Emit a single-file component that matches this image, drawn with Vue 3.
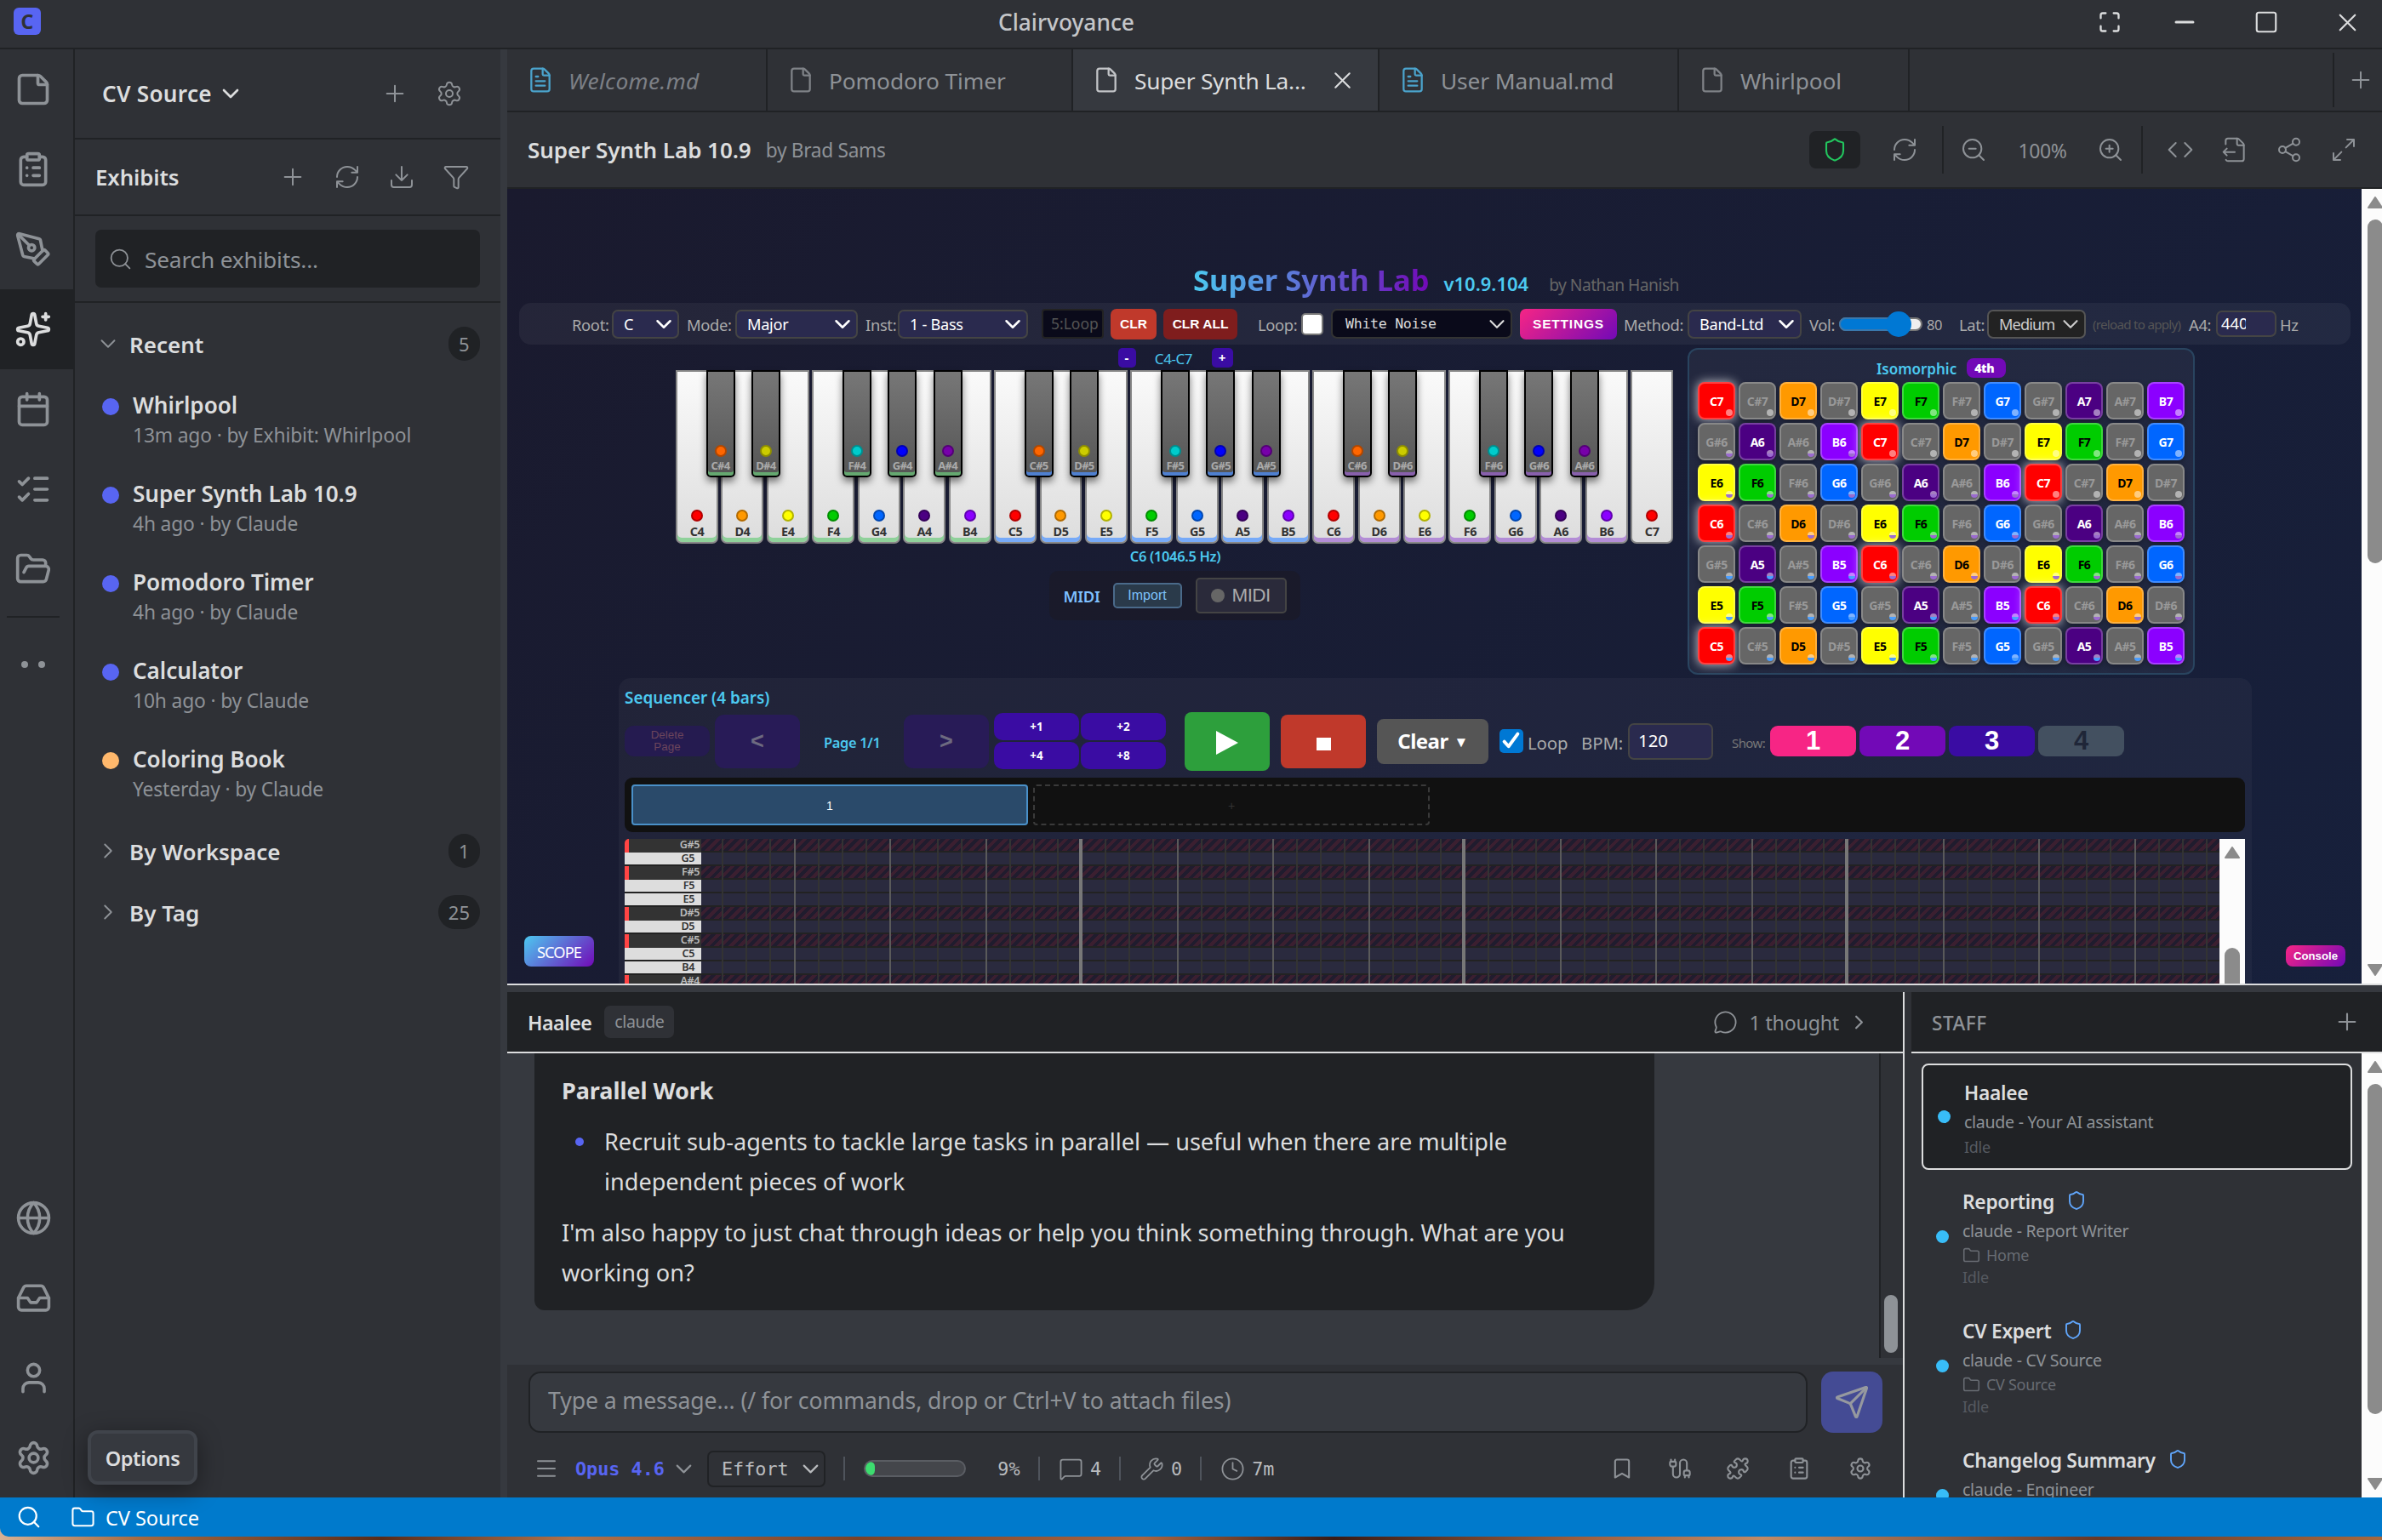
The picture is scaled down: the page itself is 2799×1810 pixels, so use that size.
<script setup>
import { h } from 'vue'

const icons = {
  note: '<path d="M21 9a2.4 2.4 0 0 0-.706-1.706l-3.588-3.588A2.4 2.4 0 0 0 15 3H5a2 2 0 0 0-2 2v14a2 2 0 0 0 2 2h14a2 2 0 0 0 2-2z"/><path d="M15 3v5a1 1 0 0 0 1 1h5"/>',
  clipboard: '<rect width="8" height="4" x="8" y="2" rx="1"/><path d="M16 4h2a2 2 0 0 1 2 2v14a2 2 0 0 1-2 2H6a2 2 0 0 1-2-2V6a2 2 0 0 1 2-2h2M12 11h4M12 16h4M8 11h.01M8 16h.01"/>',
  pen: '<path d="M15.707 21.293a1 1 0 0 1-1.414 0l-1.586-1.586a1 1 0 0 1 0-1.414l5.586-5.586a1 1 0 0 1 1.414 0l1.586 1.586a1 1 0 0 1 0 1.414z"/><path d="m18 13-1.375-6.874a1 1 0 0 0-.746-.776L3.235 2.028a1 1 0 0 0-1.207 1.207L5.35 15.879a1 1 0 0 0 .776.746L13 18"/><path d="m2.3 2.3 7.286 7.286"/><circle cx="11" cy="11" r="2"/>',
  sparkles: '<path d="M11.017 2.814a1 1 0 0 1 1.966 0l1.051 5.558a2 2 0 0 0 1.594 1.594l5.558 1.051a1 1 0 0 1 0 1.966l-5.558 1.051a2 2 0 0 0-1.594 1.594l-1.051 5.558a1 1 0 0 1-1.966 0l-1.051-5.558a2 2 0 0 0-1.594-1.594l-5.558-1.051a1 1 0 0 1 0-1.966l5.558-1.051a2 2 0 0 0 1.594-1.594z"/><path d="M20 2v4M22 4h-4"/><circle cx="4" cy="20" r="2"/>',
  calendar: '<path d="M8 2v4M16 2v4M3 10h18"/><rect width="18" height="18" x="3" y="4" rx="2"/>',
  checks: '<path d="M13 5h8M13 12h8M13 19h8M3 17l2 2 4-4M3 7l2 2 4-4"/>',
  folderOpen: '<path d="m6 14 1.5-2.9A2 2 0 0 1 9.24 10H20a2 2 0 0 1 1.94 2.5l-1.54 6a2 2 0 0 1-1.95 1.5H4a2 2 0 0 1-2-2V5a2 2 0 0 1 2-2h3.9a2 2 0 0 1 1.69.9l.81 1.2a2 2 0 0 0 1.67.9H18a2 2 0 0 1 2 2v2"/>',
  folder: '<path d="M20 20a2 2 0 0 0 2-2V8a2 2 0 0 0-2-2h-7.9a2 2 0 0 1-1.69-.9L9.6 3.9A2 2 0 0 0 7.93 3H4a2 2 0 0 0-2 2v13a2 2 0 0 0 2 2Z"/>',
  globe: '<circle cx="12" cy="12" r="10"/><path d="M12 2a14.5 14.5 0 0 0 0 20 14.5 14.5 0 0 0 0-20M2 12h20"/>',
  inbox: '<path d="M22 12h-6l-2 3h-4l-2-3H2"/><path d="M5.45 5.11 2 12v6a2 2 0 0 0 2 2h16a2 2 0 0 0 2-2v-6l-3.45-6.89A2 2 0 0 0 16.76 4H7.24a2 2 0 0 0-1.79 1.11z"/>',
  user: '<path d="M19 21v-2a4 4 0 0 0-4-4H9a4 4 0 0 0-4 4v2"/><circle cx="12" cy="7" r="4"/>',
  gear: '<path d="M9.671 4.136a2.34 2.34 0 0 1 4.659 0 2.34 2.34 0 0 0 3.319 1.915 2.34 2.34 0 0 1 2.33 4.033 2.34 2.34 0 0 0 0 3.831 2.34 2.34 0 0 1-2.33 4.033 2.34 2.34 0 0 0-3.319 1.915 2.34 2.34 0 0 1-4.659 0 2.34 2.34 0 0 0-3.32-1.915 2.34 2.34 0 0 1-2.33-4.033 2.34 2.34 0 0 0 0-3.831A2.34 2.34 0 0 1 6.35 6.051a2.34 2.34 0 0 0 3.319-1.915"/><circle cx="12" cy="12" r="3"/>',
  plus: '<path d="M5 12h14M12 5v14"/>',
  close: '<path d="M18 6 6 18M6 6l12 12"/>',
  minus: '<path d="M5 12h14"/>',
  square: '<rect width="18" height="18" x="3" y="3" rx="2"/>',
  corners: '<path d="M8 3H5a2 2 0 0 0-2 2v3M21 8V5a2 2 0 0 0-2-2h-3M3 16v3a2 2 0 0 0 2 2h3M16 21h3a2 2 0 0 0 2-2v-3"/>',
  down: '<path d="m6 9 6 6 6-6"/>',
  right: '<path d="m9 18 6-6-6-6"/>',
  refresh: '<path d="M3 12a9 9 0 0 1 9-9 9.75 9.75 0 0 1 6.74 2.74L21 8M21 3v5h-5M21 12a9 9 0 0 1-9 9 9.75 9.75 0 0 1-6.74-2.74L3 16M8 16H3v5"/>',
  download: '<path d="M21 15v4a2 2 0 0 1-2 2H5a2 2 0 0 1-2-2v-4M7 10l5 5 5-5M12 15V3"/>',
  funnel: '<path d="M10 20a1 1 0 0 0 .553.895l2 1A1 1 0 0 0 14 21v-7a2 2 0 0 1 .517-1.341L21.74 4.67A1 1 0 0 0 21 3H3a1 1 0 0 0-.742 1.67l7.225 7.989A2 2 0 0 1 10 14z"/>',
  search: '<circle cx="11" cy="11" r="8"/><path d="m21 21-4.35-4.35"/>',
  file: '<path d="M6 22a2 2 0 0 1-2-2V4a2 2 0 0 1 2-2h8a2.4 2.4 0 0 1 1.704.706l3.588 3.588A2.4 2.4 0 0 1 20 8v12a2 2 0 0 1-2 2z"/><path d="M14 2v5a1 1 0 0 0 1 1h5"/>',
  fileText: '<path d="M6 22a2 2 0 0 1-2-2V4a2 2 0 0 1 2-2h8a2.4 2.4 0 0 1 1.704.706l3.588 3.588A2.4 2.4 0 0 1 20 8v12a2 2 0 0 1-2 2z"/><path d="M14 2v5a1 1 0 0 0 1 1h5M10 9H8M16 13H8M16 17H8"/>',
  shield: '<path d="M20 13c0 5-3.5 7.5-7.66 8.95a1 1 0 0 1-.67-.01C7.5 20.5 4 18 4 13V6a1 1 0 0 1 1-1c2 0 4.5-1.2 6.24-2.72a1.17 1.17 0 0 1 1.52 0C14.51 3.81 17 5 19 5a1 1 0 0 1 1 1z"/>',
  zoomOut: '<circle cx="11" cy="11" r="8"/><path d="m21 21-4.35-4.35M8 11h6"/>',
  zoomIn: '<circle cx="11" cy="11" r="8"/><path d="m21 21-4.35-4.35M8 11h6M11 8v6"/>',
  code: '<path d="m16 18 6-6-6-6M8 6l-6 6 6 6"/>',
  fileOut: '<path d="M4.226 20.925A2 2 0 0 0 6 22h12a2 2 0 0 0 2-2V8a2.4 2.4 0 0 0-.706-1.706l-3.588-3.588A2.4 2.4 0 0 0 14 2H6a2 2 0 0 0-2 2v3.127"/><path d="M14 2v5a1 1 0 0 0 1 1h5M5 11l-3 3M5 17l-3-3h10"/>',
  share: '<circle cx="18" cy="5" r="3"/><circle cx="6" cy="12" r="3"/><circle cx="18" cy="19" r="3"/><path d="m8.59 13.51 6.83 3.98M15.41 6.51l-6.82 3.98"/>',
  expand: '<path d="M15 3h6v6M21 3l-7 7M3 21l7-7M9 21H3v-6"/>',
  bubble: '<path d="M2.992 16.342a2 2 0 0 1 .094 1.167l-1.065 3.29a1 1 0 0 0 1.236 1.168l3.413-.998a2 2 0 0 1 1.099.092 10 10 0 1 0-4.777-4.719"/>',
  message: '<path d="M22 17a2 2 0 0 1-2 2H6.828a2 2 0 0 0-1.414.586l-2.202 2.202A.71.71 0 0 1 2 21.286V5a2 2 0 0 1 2-2h16a2 2 0 0 1 2 2z"/>',
  wrench: '<path d="M14.7 6.3a1 1 0 0 0 0 1.4l1.6 1.6a1 1 0 0 0 1.4 0l3.106-3.105c.32-.322.863-.22.983.218a6 6 0 0 1-8.259 7.057l-7.91 7.91a1 1 0 0 1-2.999-3l7.91-7.91a6 6 0 0 1 7.057-8.259c.438.12.54.662.219.984z"/>',
  clock: '<circle cx="12" cy="12" r="10"/><path d="M12 6v6l4 2"/>',
  menu: '<path d="M4 5h16M4 12h16M4 19h16"/>',
  bookmark: '<path d="m19 21-7-4-7 4V5a2 2 0 0 1 2-2h10a2 2 0 0 1 2 2z"/>',
  cable: '<path d="M17 19a1 1 0 0 1-1-1v-2a2 2 0 0 1 2-2h2a2 2 0 0 1 2 2v2a1 1 0 0 1-1 1zM17 21v-2M19 14V6.5a1 1 0 0 0-7 0v11a1 1 0 0 1-7 0V10M21 21v-2M3 5V3M4 10a2 2 0 0 1-2-2V6a1 1 0 0 1 1-1h4a1 1 0 0 1 1 1v2a2 2 0 0 1-2 2zM7 5V3"/>',
  puzzle: '<path d="M15.39 4.39a1 1 0 0 0 1.68-.474 2.5 2.5 0 1 1 3.014 3.015 1 1 0 0 0-.474 1.68l1.683 1.682a2.414 2.414 0 0 1 0 3.414L19.61 15.39a1 1 0 0 1-1.68-.474 2.5 2.5 0 1 0-3.014 3.015 1 1 0 0 1 .474 1.68l-1.683 1.682a2.414 2.414 0 0 1-3.414 0L8.61 19.61a1 1 0 0 0-1.68.474 2.5 2.5 0 1 1-3.014-3.015 1 1 0 0 0 .474-1.68l-1.683-1.682a2.414 2.414 0 0 1 0-3.414L4.39 8.61a1 1 0 0 1 1.68.474 2.5 2.5 0 1 0 3.014-3.015 1 1 0 0 1-.474-1.68l1.683-1.682a2.414 2.414 0 0 1 3.414 0z"/>',
  send: '<path d="M14.536 21.686a.5.5 0 0 0 .937-.024l6.5-19a.496.496 0 0 0-.635-.635l-19 6.5a.5.5 0 0 0-.024.937l7.93 3.18a2 2 0 0 1 1.112 1.11z"/><path d="m21.854 2.147-10.94 10.939"/>',
  check: '<path d="m5 13 4.5 5L19 5"/>'
}

const Icon = (props) => h('svg', {
  viewBox: '0 0 24 24',
  width: props.size || 32,
  height: props.size || 32,
  fill: 'none',
  stroke: 'currentColor',
  'stroke-width': props.sw || 1.5,
  'stroke-linecap': 'round',
  'stroke-linejoin': 'round',
  innerHTML: icons[props.name]
})
Icon.props = ['name', 'size', 'sw']

const railTop = ['note', 'clipboard', 'pen', 'sparkles', 'calendar', 'checks', 'folderOpen']
const railBottom = ['globe', 'inbox', 'user', 'gear']

const recent = [
  { name: 'Whirlpool', meta: '13m ago · by Exhibit: Whirlpool', color: '#5865f2' },
  { name: 'Super Synth Lab 10.9', meta: '4h ago · by Claude', color: '#5865f2' },
  { name: 'Pomodoro Timer', meta: '4h ago · by Claude', color: '#5865f2' },
  { name: 'Calculator', meta: '10h ago · by Claude', color: '#5865f2' },
  { name: 'Coloring Book', meta: 'Yesterday · by Claude', color: '#ffb86c' }
]

const tabs = [
  { label: 'Welcome.md', icon: 'fileText', width: 306, cls: 'preview' },
  { label: 'Pomodoro Timer', icon: 'file', width: 359 },
  { label: 'Super Synth La...', icon: 'file', width: 360, cls: 'active' },
  { label: 'User Manual.md', icon: 'fileText', width: 352 },
  { label: 'Whirlpool', icon: 'file', width: 271 }
]

const noteNames = ['C', 'C#', 'D', 'D#', 'E', 'F', 'F#', 'G', 'G#', 'A', 'A#', 'B']
const noteColors = {
  C: '#ff0000', 'C#': '#ff6600', D: '#ff9900', 'D#': '#cccc00', E: '#ffff00', F: '#00cc00',
  'F#': '#00cccc', G: '#0066ff', 'G#': '#0000ff', A: '#4b0082', 'A#': '#7700aa', B: '#8b00ff'
}

// piano C4..C7, each white key may carry the sharp to its right
const whiteKeys = []
for (let oct = 4; oct <= 7; oct++) {
  for (const n of ['C', 'D', 'E', 'F', 'G', 'A', 'B']) {
    if (oct === 7 && n !== 'C') break
    const sharp = oct < 7 && n !== 'E' && n !== 'B' ? n + '#' : null
    whiteKeys.push({ n, oct, sharp })
  }
}

// isomorphic rows go down by a major third
const isoRows = []
for (let r = 0; r < 7; r++) {
  const row = []
  for (let c = 0; c < 12; c++) {
    const midi = 84 - r * 4 + c
    const n = noteNames[midi % 12]
    row.push({ n, oct: Math.floor(midi / 12), sharp: n.length > 1 })
  }
  isoRows.push(row)
}

const seqRows = ['G#5', 'G5', 'F#5', 'F5', 'E5', 'D#5', 'D5', 'C#5', 'C5', 'B4', 'A#4']
const lanes = ['1', '2', '3', '4']

const staff = [
  { name: 'Haalee', role: 'claude - Your AI assistant', selected: true },
  { name: 'Reporting', role: 'claude - Report Writer', folder: 'Home' },
  { name: 'CV Expert', role: 'claude - CV Source', folder: 'CV Source' },
  { name: 'Changelog Summary', role: 'claude - Engineer', folder: 'CV Source' }
]
</script>

<template>
  <div class="app">
    <header class="titlebar">
      <div class="logo">C</div>
      <div class="app-name">Clairvoyance</div>
      <div class="win-controls">
        <Icon name="corners" size="28" sw="2" />
        <Icon name="minus" size="34" sw="2.2" />
        <Icon name="square" size="30" sw="1.7" />
        <Icon name="close" size="35" sw="1.5" />
      </div>
    </header>

    <div class="main">
      <!-- activity rail -->
      <nav class="rail">
        <div v-for="i in railTop" :key="i" class="rail-item" :class="{ on: i === 'sparkles' }">
          <Icon :name="i" size="44" sw="2" />
        </div>
        <div class="rail-sep"></div>
        <div class="rail-dots"><i></i><i></i></div>
        <div class="rail-fill"></div>
        <div v-for="i in railBottom" :key="i" class="rail-item">
          <Icon :name="i" size="43" sw="2" />
        </div>
        <div class="tooltip">Options</div>
      </nav>

      <!-- exhibits sidebar -->
      <aside class="sidebar">
        <div class="ws-head">
          <span class="ws-name">CV Source</span>
          <Icon name="down" size="32" sw="2" class="ws-chev" />
          <span class="grow"></span>
          <Icon name="plus" size="32" />
          <Icon name="gear" size="32" />
        </div>
        <div class="ex-head">
          <span class="ex-title">Exhibits</span>
          <span class="grow"></span>
          <Icon name="plus" /><Icon name="refresh" /><Icon name="download" /><Icon name="funnel" />
        </div>
        <div class="ex-search">
          <div class="search-box"><Icon name="search" size="29" /><span>Search exhibits...</span></div>
        </div>
        <div class="groups">
          <div class="group-head">
            <Icon name="down" size="30" /><span>Recent</span><b>5</b>
          </div>
          <div class="recent-list">
            <div v-for="r in recent" :key="r.name" class="exhibit">
              <i class="ex-dot" :style="{ background: r.color }"></i>
              <div>
                <div class="ex-name">{{ r.name }}</div>
                <div class="ex-meta">{{ r.meta }}</div>
              </div>
            </div>
          </div>
          <div class="group-head"><Icon name="right" size="30" /><span>By Workspace</span><b>1</b></div>
          <div class="group-head"><Icon name="right" size="30" /><span>By Tag</span><b>25</b></div>
        </div>
      </aside>
      <div class="v-split"></div>

      <section class="content">
        <div class="tabs">
          <div v-for="t in tabs" :key="t.label" class="tab" :class="[t.cls, t.icon]" :style="{ width: t.width + 'px' }">
            <Icon :name="t.icon" size="32" sw="1.7" />
            <span>{{ t.label }}</span>
            <Icon v-if="t.cls === 'active'" name="close" size="33" class="tab-x" />
          </div>
          <div class="grow"></div>
          <div class="tab-add"><Icon name="plus" size="32" /></div>
        </div>

        <div class="ex-bar">
          <span class="bar-title">Super Synth Lab 10.9</span>
          <span class="bar-by">by Brad Sams</span>
          <span class="grow"></span>
          <div class="bar-tools">
            <span class="trust"><Icon name="shield" size="30" sw="1.7" /></span>
            <Icon name="refresh" class="t-refresh" />
            <span class="tool-sep"></span>
            <Icon name="zoomOut" class="t-zout" />
            <span class="pct">100%</span>
            <Icon name="zoomIn" class="t-zin" />
            <span class="tool-sep second"></span>
            <Icon name="code" class="t-code" />
            <Icon name="fileOut" class="t-act" />
            <Icon name="share" class="t-act" />
            <Icon name="expand" class="t-act" />
          </div>
        </div>

        <!-- exhibit frame -->
        <div class="frame">
          <div class="synth">
            <div class="s-title">
              <span class="s-name">Super Synth Lab</span>
              <span class="s-ver">v10.9.104</span>
              <span class="s-by">by Nathan Hanish</span>
            </div>

            <div class="s-toolbar">
              <label>Root:</label>
              <div class="sel w79">C<Icon name="down" size="30" sw="2" /></div>
              <label>Mode:</label>
              <div class="sel w144">Major<Icon name="down" size="30" sw="2" /></div>
              <label>Inst:</label>
              <div class="sel w153">1 - Bass<Icon name="down" size="30" sw="2" /></div>
              <div class="slot">5:Loop</div>
              <button class="red">CLR</button>
              <button class="darkred">CLR ALL</button>
              <label>Loop:</label>
              <div class="box"></div>
              <div class="sel noise">White Noise<Icon name="down" size="30" sw="1.7" /></div>
              <button class="pink">SETTINGS</button>
              <label>Method:</label>
              <div class="sel w134">Band-Ltd<Icon name="down" size="30" sw="2" /></div>
              <label>Vol:</label>
              <div class="slider"><i></i><b></b></div>
              <label class="vol">80</label>
              <label>Lat:</label>
              <div class="sel lat">Medium<Icon name="down" size="30" sw="1.7" /></div>
              <label class="hint">(reload to apply)</label>
              <label>A4:</label>
              <div class="a4"><span>440</span></div>
              <label>Hz</label>
            </div>

            <div class="play-area">
              <div class="keys-col">
                <div class="range"><b>-</b><span>C4-C7</span><b class="wide">+</b></div>
                <div class="piano">
                  <div v-for="k in whiteKeys" :key="k.n + k.oct" class="wkey" :class="'o' + k.oct">
                    <i class="dot" :style="{ background: noteColors[k.n] }"></i>
                    <span>{{ k.n }}{{ k.oct }}</span>
                    <div v-if="k.sharp" class="bkey" :class="'o' + k.oct">
                      <i class="dot" :style="{ background: noteColors[k.sharp] }"></i>
                      <span>{{ k.sharp }}{{ k.oct }}</span>
                    </div>
                  </div>
                </div>
                <div class="freq">C6 (1046.5 Hz)</div>
                <div class="midi">
                  <span>MIDI</span>
                  <div class="import">Import</div>
                  <div class="midi-btn"><i></i>MIDI</div>
                </div>
              </div>

              <div class="iso">
                <div class="iso-head"><span>Isomorphic</span><b>4th</b></div>
                <div class="iso-grid">
                  <template v-for="(row, r) in isoRows" :key="r">
                    <div
                      v-for="(c, i) in row"
                      :key="r + '-' + i"
                      class="cell"
                      :class="['p' + c.oct, c.sharp ? 'sharp' : 'n' + c.n]"
                      :style="c.sharp ? null : { backgroundColor: noteColors[c.n] }"
                    >{{ c.n }}{{ c.oct }}<i></i></div>
                  </template>
                </div>
              </div>
            </div>

            <div class="seq">
              <div class="seq-title">Sequencer (4 bars)</div>
              <div class="seq-ctl">
                <button class="del">Delete<br>Page</button>
                <button class="nav">&lt;</button>
                <span class="page">Page 1/1</span>
                <button class="nav">&gt;</button>
                <div class="adds"><b>+1</b><b>+2</b><b>+4</b><b>+8</b></div>
                <button class="play"><svg width="26" height="28" viewBox="0 0 26 28"><path d="M0 0 26 14 0 28z" fill="#fff" /></svg></button>
                <button class="stop"><i></i></button>
                <button class="clear">Clear <small>▼</small></button>
                <div class="box checked"><Icon name="check" size="27" sw="3.4" /></div>
                <label>Loop</label>
                <label>BPM:</label>
                <div class="bpm">120</div>
                <label class="show">Show:</label>
                <div class="lanes">
                  <b v-for="l in lanes" :key="l" :class="'l' + l">{{ l }}</b>
                </div>
              </div>
              <div class="pages">
                <div class="pg">1</div>
                <div class="pg add">+</div>
              </div>
              <div class="roll">
                <div class="roll-rows">
                  <div v-for="n in seqRows" :key="n" class="rrow" :class="{ blk: n.length > 2 }">
                    <div class="rlabel">{{ n }}</div>
                    <div v-for="s in 64" :key="s" class="step" :class="{ beat: s % 4 === 0, measure: s % 16 === 0 }"></div>
                  </div>
                </div>
                <div class="roll-scroll">
                  <svg width="20" height="14" viewBox="0 0 20 14"><path d="M10 1 18 13H2z" fill="#8b8b8b" stroke="#8b8b8b" stroke-width="2" stroke-linejoin="round" /></svg>
                  <i></i>
                </div>
              </div>
            </div>
            <div class="scope">SCOPE</div>
            <div class="console">Console</div>
          </div>
          <div class="scroll">
            <svg width="20" height="14" viewBox="0 0 20 14"><path d="M10 1 18 13H2z" fill="#8b8b8b" stroke="#8b8b8b" stroke-width="2" stroke-linejoin="round" /></svg>
            <i class="thumb"></i>
            <svg width="20" height="14" viewBox="0 0 20 14"><path d="M10 13 18 1H2z" fill="#8b8b8b" stroke="#8b8b8b" stroke-width="2" stroke-linejoin="round" /></svg>
          </div>
        </div>
        <div class="h-split"></div>

        <div class="bottom">
          <!-- chat -->
          <div class="chat">
            <div class="chat-head">
              <span class="agent">Haalee</span>
              <span class="model">claude</span>
              <span class="grow"></span>
              <Icon name="bubble" size="29" />
              <span class="thought">1 thought</span>
              <Icon name="right" size="27" sw="2" />
            </div>
            <div class="chat-body">
              <div class="msg">
                <h4>Parallel Work</h4>
                <ul>
                  <li>Recruit sub-agents to tackle large tasks in parallel — useful when there are multiple<br>independent pieces of work</li>
                </ul>
                <p>I'm also happy to just chat through ideas or help you think something through. What are you<br>working on?</p>
              </div>
              <div class="chat-scroll"><i></i></div>
            </div>
            <div class="composer">
              <div class="input-row">
                <div class="input">Type a message... (/ for commands, drop or Ctrl+V to attach files)</div>
                <div class="send"><Icon name="send" size="42" sw="1.8" /></div>
              </div>
              <div class="status-row">
                <Icon name="menu" size="30" sw="1.6" />
                <span class="opus">Opus 4.6</span>
                <Icon name="down" size="31" sw="1.7" class="opus-chev" />
                <div class="effort">Effort<Icon name="down" size="31" sw="1.7" /></div>
                <i class="bar"></i>
                <div class="meter"><i></i></div>
                <span class="m-pct">9%</span>
                <i class="bar b2"></i>
                <span class="stat"><Icon name="message" size="29" />4</span>
                <i class="bar"></i>
                <span class="stat"><Icon name="wrench" size="29" />0</span>
                <i class="bar"></i>
                <span class="stat"><Icon name="clock" size="29" />7m</span>
                <span class="grow"></span>
                <div class="quick">
                  <Icon name="bookmark" size="28" sw="1.8" />
                  <Icon name="cable" size="28" sw="1.8" />
                  <Icon name="puzzle" size="28" sw="1.8" />
                  <Icon name="clipboard" size="28" sw="1.8" />
                  <Icon name="gear" size="28" sw="1.8" />
                </div>
              </div>
            </div>
          </div>

          <!-- staff -->
          <div class="staff">
            <div class="staff-head"><span>STAFF</span><Icon name="plus" size="32" sw="1.6" /></div>
            <div class="staff-body">
              <div class="staff-list">
                <div v-for="s in staff" :key="s.name" class="person" :class="{ selected: s.selected }">
                  <i class="p-dot"></i>
                  <div>
                    <div class="p-name">{{ s.name }}<Icon v-if="!s.selected" name="shield" size="24" sw="1.9" /></div>
                    <div class="p-role">{{ s.role }}</div>
                    <div v-if="s.folder" class="p-folder"><Icon name="folder" size="21" sw="1.8" />{{ s.folder }}</div>
                    <div class="p-idle">Idle</div>
                  </div>
                </div>
              </div>
              <div class="scroll small">
                <svg width="20" height="14" viewBox="0 0 20 14"><path d="M10 1 18 13H2z" fill="#8b8b8b" stroke="#8b8b8b" stroke-width="2" stroke-linejoin="round" /></svg>
                <i class="thumb"></i>
                <svg width="20" height="14" viewBox="0 0 20 14"><path d="M10 13 18 1H2z" fill="#8b8b8b" stroke="#8b8b8b" stroke-width="2" stroke-linejoin="round" /></svg>
              </div>
            </div>
          </div>
        </div>
      </section>
    </div>

    <div class="desk">
      <footer class="statusbar">
        <Icon name="search" size="30" sw="1.8" />
        <Icon name="folder" size="29" sw="1.7" />
        <span>CV Source</span>
      </footer>
    </div>
  </div>
</template>

<style>
body { margin: 0; background: #2f3136; overflow: hidden; }
</style>

<style scoped>
* { box-sizing: border-box; }
svg { flex-shrink: 0; display: block; }
button { border: 0; padding: 0; margin: 0; color: #fff; font-family: inherit; }
i { font-style: normal; }

.app {
  width: 2799px;
  height: 1810px;
  display: flex;
  flex-direction: column;
  background: #2f3136;
  color: #dcddde;
  font-family: "Noto Sans", sans-serif;
  overflow: hidden;
  white-space: nowrap;
}
.grow { flex: 1; }

/* ── title bar ── */
.titlebar {
  height: 58px;
  flex-shrink: 0;
  border-bottom: 2px solid #202225;
  display: flex;
  align-items: center;
  padding-left: 16px;
  padding-bottom: 4px;
}
.logo {
  width: 32px;
  height: 32px;
  margin-bottom: 2px;
  border-radius: 6px;
  background: #5865f2;
  color: #2f3136;
  font-size: 23px;
  font-weight: 700;
  line-height: 33px;
  text-align: center;
}
.app-name { margin-left: 1125px; font-size: 26.3px; font-weight: 500; color: #c4c6c9; }
.win-controls { margin-left: auto; display: flex; align-items: center; padding-right: 23px; color: #dcddde; }
.win-controls svg:nth-child(2) { margin-left: 57px; }
.win-controls svg:nth-child(3) { margin-left: 64px; }
.win-controls svg:nth-child(4) { margin-left: 63px; }

.main { flex: 1; display: flex; min-height: 0; }

/* ── rail ── */
.rail {
  position: relative;
  width: 88px;
  flex-shrink: 0;
  border-right: 2px solid #202225;
  display: flex;
  flex-direction: column;
  color: #8e9297;
}
.rail-item { height: 94px; padding-right: 8px; display: flex; align-items: center; justify-content: center; }
.rail-item.on { background: #202225; color: #dcddde; }
.rail-sep { margin: 8px 16px 0 8px; height: 2px; background: #202225; }
.rail-dots { display: flex; gap: 12px; margin: 51px 0 0 25px; }
.rail-dots i { width: 8px; height: 8px; border-radius: 50%; background: #8e9297; }
.rail-fill { flex: 1; }
.tooltip {
  position: absolute;
  left: 103px;
  bottom: 15px;
  z-index: 5;
  width: 129px;
  height: 64px;
  border: 4px solid #40444b;
  border-radius: 12px;
  background: #36393f;
  color: #dcddde;
  font-size: 23.5px;
  font-weight: 600;
  line-height: 58px;
  text-align: center;
  letter-spacing: -0.4px;
  box-shadow: 0 7px 28px rgba(0, 0, 0, 0.4);
}

/* ── sidebar ── */
.sidebar { width: 500px; flex-shrink: 0; display: flex; flex-direction: column; }
.ws-head {
  height: 106px;
  border-bottom: 2px solid #202225;
  display: flex;
  align-items: center;
  padding: 0 44px 0 32px;
  color: #8e9297;
}
.ws-head svg:last-child { margin-left: 32px; }
.ws-name { font-size: 26.2px; font-weight: 600; color: #dcddde; letter-spacing: 0.25px; }
.ws-head .ws-chev { margin-left: 6px; color: #dcddde; }
.ex-head {
  height: 90px;
  border-bottom: 2px solid #202225;
  display: flex;
  align-items: center;
  padding: 0 36px 0 24px;
  color: #8e9297;
}
.ex-head svg + svg { margin-left: 32px; }
.ex-title { font-size: 25.8px; font-weight: 600; color: #dcddde; letter-spacing: -0.1px; }
.ex-search { height: 102px; border-bottom: 2px solid #202225; padding: 16px 24px; }
.search-box {
  height: 68px;
  border-radius: 7px;
  background: #202225;
  display: flex;
  align-items: center;
  gap: 14px;
  padding: 1px 0 0 15px;
  color: #8e9297;
  font-size: 26.3px;
  letter-spacing: -0.2px;
}
.groups { padding-top: 12px; }
.group-head { height: 72px; display: flex; align-items: center; padding: 0 24px; color: #8e9297; }
.group-head span { margin-left: 10px; padding-top: 1px; font-size: 26px; font-weight: 600; color: #dcddde; }
.group-head b {
  margin-left: auto;
  min-width: 37px;
  height: 40px;
  padding: 0 12px;
  border-radius: 20px;
  background: #202225;
  color: #8e9297;
  font-size: 22px;
  font-weight: 400;
  line-height: 41px;
}
.recent-list { height: 524px; }
.exhibit { height: 104px; display: flex; padding: 8px 0 0 32px; }
.ex-dot { width: 20px; height: 20px; margin: 20px 16px 0 0; border-radius: 50%; }
.ex-name { margin-top: 10px; font-size: 26.1px; font-weight: 600; line-height: 37px; letter-spacing: -0.05px; }
.ex-meta { font-size: 22.8px; line-height: 34px; color: #8e9297; letter-spacing: -0.15px; }
.v-split { width: 8px; flex-shrink: 0; background: #36393f; }

/* ── tabs ── */
.content { flex: 1; min-width: 0; display: flex; flex-direction: column; }
.tabs { height: 74px; flex-shrink: 0; border-bottom: 2px solid #202225; display: flex; }
.tab {
  border-right: 2px solid #202225;
  display: flex;
  align-items: center;
  padding-left: 23px;
  font-size: 26.3px;
  color: #8e9297;
  letter-spacing: -0.1px;
}
.tab span { margin-left: 17px; padding-top: 2px; }
.tab svg { color: #7f8287; }
.tab.fileText svg { color: #4ba3cc; }
.tab.active { background: #36393f; color: #dcddde; letter-spacing: -0.25px; }
.tab.active svg { color: #c2c4c7; }
.tab.active svg.tab-x { margin-left: 26px; color: #dcddde; }
.tab.preview { font-style: italic; color: #7d8086; letter-spacing: 0.4px; }
.tab-add { width: 58px; height: 64px; margin-top: 4px; border-left: 2px solid #202225; color: #8e9297; display: flex; align-items: center; padding-left: 15px; }

/* ── exhibit bar ── */
.ex-bar { height: 90px; flex-shrink: 0; border-bottom: 2px solid #202225; display: flex; align-items: center; padding-left: 24px; }
.bar-title { font-size: 26px; font-weight: 600; letter-spacing: -0.05px; }
.bar-by { margin-left: 17px; font-size: 22.7px; color: #8e9297; letter-spacing: -0.3px; }
.bar-tools { display: flex; align-items: center; margin-right: 29px; color: #8e9297; }
.trust { width: 60px; height: 44px; border-radius: 8px; background: #202225; color: #22c55e; display: grid; place-items: center; }
.t-refresh { margin-left: 36px; }
.tool-sep { width: 2px; height: 56px; margin-left: 28px; background: #202225; }
.tool-sep.second { margin-left: 20px; }
.t-zout { margin-left: 19px; }
.t-zin { margin-left: 24px; }
.t-code { margin-left: 28px; }
.t-act { margin-left: 32px; }
.pct { width: 80px; margin-left: 25px; padding-top: 1px; text-align: center; font-size: 23px; letter-spacing: -0.4px; }

/* ── frame ── */
.frame { height: 936px; flex-shrink: 0; display: flex; border-bottom: 2px solid #dcddde; overflow: hidden; }
.synth {
  position: relative;
  width: 2179px;
  height: 934px;
  overflow: hidden;
  background: linear-gradient(135deg, #1a1a2e 0%, #16213e 120%);
  color: #aaa;
}
.scroll { width: 24px; background: #fcfcfc; display: flex; flex-direction: column; overflow: hidden; padding: 9px 0 8px 6px; flex-shrink: 0; }
.scroll .thumb { width: 18px; height: 404px; margin: 13px 0 471px 1px; border-radius: 9px; background: #8b8b8b; flex-shrink: 0; }
.scroll.small .thumb { height: 388px; margin-bottom: 75px; }

.s-title { height: 134px; padding-top: 80px; display: flex; align-items: baseline; }
.s-name {
  margin-left: 806px;
  font-size: 34.5px;
  font-weight: 700;
  line-height: 54px;
  background: linear-gradient(90deg, #4cc9f0, #7209b7);
  -webkit-background-clip: text;
  background-clip: text;
  color: transparent;
}
.s-ver { margin-left: 17px; font-size: 22px; font-weight: 600; color: #4cc9f0; }
.s-by { margin-left: 24px; font-size: 19.3px; color: #666; letter-spacing: -0.55px; }

.s-toolbar {
  margin: 0 13px 0 14px;
  height: 49px;
  border-radius: 14px;
  background: rgba(255, 255, 255, 0.05);
  padding-left: 62px;
  display: grid;
  grid-template-columns: 47px 88px 57px 153px 38px 169px 81px 62px 111px 51px 35px 222px 122px 75px 143px 35px 103px 38px 33px 124px 113px 32px 75px auto;
  align-items: center;
  font-size: 18.4px;
}
.s-toolbar label { padding-top: 1px; letter-spacing: -0.35px; }
.sel {
  height: 34px;
  border: 2px solid #444;
  border-radius: 7px;
  background: #2a2a4e;
  color: #fff;
  font-size: 18.2px;
  line-height: 26px;
  letter-spacing: -0.3px;
  display: flex;
  align-items: center;
  justify-content: space-between;
  padding: 0 1px 0 12px;
}
.w79 { width: 79px; }
.w144 { width: 144px; }
.w153 { width: 153px; }
.w134 { width: 134px; }
.sel.noise { width: 213px; height: 35px; background: #0a0a1a; border-color: #333; color: #ddd; font: 16.6px "DejaVu Sans Mono", monospace; padding-left: 15px; }
.sel.lat { width: 116px; background: #222; border-color: #555; color: #ccc; letter-spacing: -0.9px; }
.slot { width: 73px; height: 35px; border: 2px solid #222; border-radius: 4px; background: #0a0a1a; color: #555; font-size: 17.5px; line-height: 30px; padding-left: 9px; }
.s-toolbar button { height: 36px; border-radius: 7px; font: 700 15.5px "Liberation Sans", sans-serif; }
.s-toolbar .red { width: 54px; background: #c0392b; }
.s-toolbar .darkred { width: 87px; background: #7f1d1d; }
.s-toolbar .pink { width: 114px; background: linear-gradient(135deg, #f72585, #7209b7); letter-spacing: 0.8px; }
.box { width: 26px; height: 26px; border: 2px solid #767676; border-radius: 5px; background: #fff; }
.slider { position: relative; width: 98px; height: 16px; border: 2px solid #767676; border-radius: 9px; background: #efefef; }
.slider i { display: block; width: 70px; height: 16px; margin: -2px; border: 2px solid #3a78ad; border-radius: 9px; background: #0078d4; }
.slider b { position: absolute; left: 53px; top: -9px; width: 30px; height: 30px; border-radius: 50%; background: #0078d4; }
.s-toolbar .vol { font-size: 16.5px; }
.s-toolbar .hint { font-size: 15.2px; color: #555; letter-spacing: -0.75px; }
.a4 { width: 71px; height: 31px; border: 2px solid #444; border-radius: 7px; background: #2a2a4e; color: #fff; padding-left: 4px; line-height: 25px; }
.a4 span { display: block; width: 29px; overflow: hidden; }

.play-area { display: flex; height: 392px; }
.keys-col { width: 1172px; margin-left: 198px; display: flex; flex-direction: column; align-items: center; }
.range { display: flex; align-items: center; height: 23px; margin: 4px 0 3px; padding-left: 2px; font-size: 17px; color: #4cc9f0; }
.range b { width: 21px; height: 23px; border-radius: 5px; background: #3a0ca3; color: #fff; font-size: 15px; line-height: 23px; text-align: center; }
.range .wide { width: 25px; }
.range span { width: 89px; padding-top: 1px; text-align: center; letter-spacing: -0.4px; }
.piano { width: 1172px; height: 204px; display: flex; gap: 3.46px; }
.wkey {
  position: relative;
  flex: 1;
  border: 2px solid #888;
  border-radius: 0 0 7px 7px;
  background: linear-gradient(#fafafa, #ddd);
  display: flex;
  flex-direction: column;
  align-items: center;
  color: #333;
  font-size: 14.4px;
  font-weight: 700;
  line-height: 20px;
  letter-spacing: -0.4px;
}
.wkey > .dot { margin-top: 162px; }
.wkey > span { margin-top: 2px; }
.dot { width: 14px; height: 14px; border: 2px solid rgba(0, 0, 0, 0.3); border-radius: 50%; }
.wkey.o4 { box-shadow: inset 0 -5px #8fd19a; }
.wkey.o5 { box-shadow: inset 0 -5px #77aaf8; }
.wkey.o6 { box-shadow: inset 0 -5px #b38dd6; }
.bkey {
  position: absolute;
  left: 33.5px;
  top: -2px;
  z-index: 2;
  width: 34px;
  height: 126px;
  border: 2px solid #000;
  border-radius: 0 0 5px 5px;
  background: linear-gradient(#777, #555);
  display: flex;
  flex-direction: column;
  align-items: center;
  color: #aaa;
  font-size: 13px;
  letter-spacing: -0.7px;
}
.bkey .dot { margin-top: 86px; flex-shrink: 0; }
.bkey.o4 { box-shadow: inset 0 -4px #65a870, 0 5px 8px rgba(0, 0, 0, 0.5); }
.bkey.o5 { box-shadow: inset 0 -4px #4f80d0, 0 5px 8px rgba(0, 0, 0, 0.5); }
.bkey.o6 { box-shadow: inset 0 -4px #8860ac, 0 5px 8px rgba(0, 0, 0, 0.5); }
.freq { margin-top: 2px; height: 24px; padding-left: 2px; font-size: 16.4px; font-weight: 600; line-height: 25px; color: #4cc9f0; letter-spacing: -0.3px; }
.midi { margin-top: 6px; width: 295px; height: 58px; border-radius: 10px; background: rgba(26, 26, 40, 0.8); display: flex; align-items: center; padding-left: 17px; }
.midi span { width: 58px; font-size: 18.4px; font-weight: 600; color: #7fc0ff; letter-spacing: -0.3px; }
.import { width: 81px; height: 30px; border: 2px solid #4a6a8a; border-radius: 5px; background: #2a3a4a; color: #7cc0f8; font: 16px "Liberation Sans", sans-serif; line-height: 25px; text-align: center; }
.midi-btn { margin-left: 16px; width: 107px; height: 42px; border: 2px solid #444; border-radius: 5px; background: #2a2a3a; color: #aaa; font: 22.5px "Liberation Sans", sans-serif; display: flex; align-items: center; letter-spacing: -0.6px; }
.midi-btn i { width: 16px; height: 16px; margin: 0 9px 0 16px; border-radius: 50%; background: #666; }

/* ── isomorphic pad ── */
.iso { margin: 4px 0 0 17px; width: 596px; height: 384px; border: 2px solid #29445f; border-radius: 12px; background: rgba(255, 255, 255, 0.05); padding: 10px; }
.iso-head { display: flex; height: 28px; padding: 0 0 0 210px; align-items: flex-start; font-size: 17px; font-weight: 600; color: #4cc9f0; line-height: 26px; }
.iso-head b { margin-left: 12px; width: 46px; height: 23px; border-radius: 8px; background: #7209b7; color: #fff; font-size: 14px; line-height: 23px; padding-left: 9px; letter-spacing: -0.3px; }
.iso-grid { display: grid; grid-template-columns: repeat(12, 44px); grid-auto-rows: 44px; gap: 4px; }
.cell {
  position: relative;
  border: 2px solid rgba(255, 255, 255, 0.25);
  border-radius: 8px;
  color: #fff;
  font-size: 14px;
  font-weight: 700;
  line-height: 42px;
  text-align: center;
  letter-spacing: -0.5px;
  box-shadow: 0 3px 6px rgba(0, 0, 0, 0.3);
}
.cell.sharp { background: #666; border-color: #888; color: #999; }
.cell.nC { box-shadow: 0 0 12px 1px rgba(255, 255, 255, 0.65); }
.cell.nD, .cell.nE, .cell.nF { color: #000; }
.cell i { position: absolute; right: 1px; bottom: 2px; width: 8px; height: 8px; border-radius: 50%; background: rgba(255, 255, 255, 0.5); }
.cell.p6 i { background: linear-gradient(rgba(255, 255, 255, 0.5) 50%, #9b6bd0 50%); }
.cell.p5 i { background: linear-gradient(rgba(255, 255, 255, 0.5) 50%, #4a9eff 50%); }

/* ── sequencer ── */
.seq { margin-left: 131px; width: 1919px; height: 400px; border-radius: 14px; background: rgba(255, 255, 255, 0.035); padding-left: 7px; }
.seq-title { padding-top: 8px; height: 38px; font-size: 18.9px; font-weight: 600; line-height: 30px; color: #4cc9f0; }
.seq-ctl {
  height: 72px;
  display: grid;
  grid-template-columns: 106px 128px 94px 106px 224px 113px 113px 144px 33px 63px 55px 122px 45px auto;
  align-items: center;
  font-size: 20.4px;
}
.seq-ctl button { width: 100px; border-radius: 11px; }
.seq-ctl .del { height: 36px; background: #251b50; color: #6c455c; font: 13.4px/14px "Liberation Sans", sans-serif; }
.seq-ctl .nav { height: 63px; background: #281b57; color: #6d6a80; font: 700 27px "Liberation Sans", sans-serif; }
.page { font-size: 16.4px; font-weight: 600; color: #4cc9f0; padding-top: 3px; letter-spacing: -0.3px; }
.adds { width: 202px; display: grid; grid-template-columns: 1fr 1fr; gap: 2px; }
.adds b { height: 32px; border-radius: 10px; background: #3a0ca3; color: #fff; font-size: 13.4px; line-height: 32px; text-align: center; }
.seq-ctl .play { height: 69px; border-radius: 8px; background: #2d9f3c; display: grid; place-items: center; padding: 4px 0 0 0; }
.seq-ctl .stop { height: 63px; border-radius: 8px; background: #c0392b; display: grid; place-items: center; padding-top: 6px; }
.stop i { width: 17px; height: 15px; background: #fff; }
.seq-ctl .clear { width: 131px; height: 53px; border-radius: 8px; background: #555; font-size: 24px; font-weight: 700; letter-spacing: -0.5px; line-height: 50px; }
.clear small { font-size: 17px; vertical-align: 2px; margin-left: 1px; }
.box.checked { width: 28px; height: 28px; border: 0; background: #0078d4; color: #fff; }
.seq-ctl label { padding-top: 4px; letter-spacing: -0.1px; }
.bpm { width: 100px; height: 43px; border: 2px solid #444; border-radius: 7px; background: #2a2a4e; color: #fff; padding-left: 10px; line-height: 37px; }
.seq-ctl .show { font-size: 15px; color: #777; letter-spacing: -0.6px; }
.lanes { display: flex; gap: 4px; }
.lanes b { width: 101px; height: 36px; border-radius: 9px; color: #fff; font: 700 31px/36px "Liberation Sans", sans-serif; text-align: center; }
.l1 { background: #f72585; }
.l2 { background: #7209b7; }
.l3 { background: #3a0ca3; }
.lanes .l4 { background: #435060; color: #1f2638; }
.pages { width: 1904px; height: 64px; margin-top: 7px; border-radius: 9px; background: #111; display: flex; gap: 6px; padding: 8px; }
.pg { width: 466px; height: 48px; border: 2px solid #4a90c8; border-radius: 4px; background: #2a4a6a; color: #fff; font: 14px "Liberation Sans", sans-serif; line-height: 46px; text-align: center; }
.pg.add { border: 2px dashed #3a3a3a; background: none; color: #333; }
.roll { width: 1904px; height: 190px; margin-top: 8px; display: flex; }
.roll-rows { width: 1874px; overflow: hidden; border-radius: 5px 0 0 0; }
.rrow { display: flex; height: 16px; width: 1892px; background: #222; }
.rlabel { width: 90px; height: 14px; background: #ddd; color: #333; font-size: 12.6px; font-weight: 600; line-height: 14px; text-align: right; padding-right: 8px; letter-spacing: -0.4px; flex-shrink: 0; }
.blk .rlabel { height: 16px; background: #333; color: #bbb; border-left: 5px solid #f44; padding-right: 2px; }
.step {
  width: 28.125px;
  height: 16px;
  flex-shrink: 0;
  background: #2a2a3e;
  border-right: 2px solid #333;
  box-shadow: inset 0 -2px #222;
}
.step:nth-child(2) { width: 26.125px; }
.blk .step { background: repeating-linear-gradient(-45deg, #201c2e 0 4px, #3b1f30 4px 8px) padding-box; }
.step.beat { border-right-color: #5a5a5a; }
.step.measure { border-right: 4px solid #777; }
.roll-scroll { width: 30px; background: #fcfcfc; padding: 9px 0 0 5px; }
.roll-scroll i { display: block; width: 18px; height: 80px; margin: 105px 0 0 1px; border-radius: 9px; background: #8b8b8b; }
.scope, .console { position: absolute; color: #fff; text-align: center; border-radius: 8px; }
.scope { left: 20px; bottom: 20px; width: 82px; height: 36px; background: linear-gradient(135deg, #4cc9f0, #7209b7); font-size: 18.3px; line-height: 38px; letter-spacing: -0.9px; }
.console { right: 19px; bottom: 20px; width: 70px; height: 25px; background: linear-gradient(135deg, #f72585, #7209b7); font: 700 13.2px/25px "Liberation Sans", sans-serif; }

.h-split { height: 8px; flex-shrink: 0; background: #36393f; }

/* ── chat ── */
.bottom { flex: 1; display: flex; min-height: 0; }
.chat { width: 1642px; flex-shrink: 0; border-right: 2px solid #dcddde; display: flex; flex-direction: column; }
.chat-head { height: 72px; flex-shrink: 0; background: #202225; border-bottom: 2px solid #dcddde; display: flex; align-items: center; padding: 0 38px 0 24px; color: #8e9297; }
.agent { padding-top: 1px; font-size: 23.2px; font-weight: 600; color: #dcddde; letter-spacing: -0.5px; }
.model { margin-left: 15px; width: 82px; height: 38px; border-radius: 7px; background: #2f3136; font-size: 19.6px; line-height: 37px; text-align: center; letter-spacing: -0.4px; }
.thought { margin: 0 10px 0 13px; padding-top: 1px; font-size: 23.2px; letter-spacing: -0.2px; }
.chat-body { height: 366px; flex-shrink: 0; background: #36393f; display: flex; justify-content: space-between; padding-left: 32px; padding-bottom: 8px; }
.msg { width: 1316px; height: 302px; border-radius: 0 0 32px 12px; background: #202225; padding: 20px 32px 0; font-size: 27.1px; line-height: 47px; }
.msg h4 { margin: 0; font-size: 27px; font-weight: 700; letter-spacing: -0.05px; }
.msg ul { margin: 13px 0 0; padding: 0; list-style: none; }
.msg li { position: relative; padding-left: 50px; }
.msg li::before { content: ""; position: absolute; left: 16px; top: 19px; width: 10px; height: 10px; border-radius: 50%; background: #5865f2; }
.msg p { margin: 13px 0 0; }
.chat-scroll { width: 28px; border-left: 2px solid #202225; background: #2f3136; padding: 284px 0 0 4px; }
.chat-scroll i { display: block; width: 16px; height: 68px; border-radius: 8px; background: #8e9297; }
.composer { flex: 1; padding: 8px 24px 0 25px; }
.input-row { display: flex; gap: 16px; }
.input { width: 1503px; height: 72px; border: 2px solid #202225; border-radius: 14px; background: #36393f; color: #8e9297; font-size: 26.6px; line-height: 64px; padding-left: 21px; letter-spacing: -0.08px; }
.send { width: 72px; height: 72px; border-radius: 14px; background: #444b94; color: #96999f; display: grid; place-items: center; }
.status-row { height: 84px; display: flex; align-items: center; padding-left: 6px; color: #8e9297; font: 21.8px "DejaVu Sans Mono", monospace; }
.opus { margin-left: 19px; font-weight: 700; color: #5865f2; }
.opus-chev { margin-left: 7px; }
.effort { margin-left: 12px; width: 139px; height: 43px; border: 2px solid #202225; border-radius: 7px; color: #b9bbbe; display: flex; align-items: center; justify-content: space-between; padding: 0 0 0 15px; }
.bar { width: 2px; height: 28px; margin-left: 21px; background: #4f545c; }
.meter { margin-left: 22px; width: 120px; height: 20px; border: 2px solid #5a5d63; border-radius: 10px; background: #44464b; overflow: hidden; }
.meter i { display: block; width: 11px; height: 16px; border-radius: 8px; background: #3ddc6f; }
.m-pct { width: 84px; text-align: center; padding-left: 17px; color: #b9bbbe; }
.stat { display: flex; align-items: center; gap: 8px; color: #b9bbbe; margin-left: 22px; }
.stat svg { color: #8e9297; }
.bar.b2 { margin-left: 1px; }
.quick { display: flex; padding-right: 12px; }
.quick svg { margin-left: 40px; }
.quick svg:nth-child(n + 4) { margin-left: 44px; }

/* ── staff ── */
.staff { flex: 1; min-width: 0; margin-left: 8px; display: flex; flex-direction: column; }
.staff-head { height: 72px; flex-shrink: 0; background: #202225; border-bottom: 2px solid #dcddde; display: flex; align-items: center; justify-content: space-between; padding: 0 25px 0 24px; color: #8e9297; font-size: 22.6px; font-weight: 500; letter-spacing: 0.5px; }
.staff-head span { padding-top: 2px; }
.staff-body { flex: 1; display: flex; min-height: 0; }
.staff-list { width: 529px; padding: 12px 11px 0 12px; overflow: hidden; }
.person { height: 152px; display: flex; align-items: center; padding: 0 0 0 17px; }
.person.selected { height: 125px; margin-bottom: 2px; border: 2px solid #dcddde; border-radius: 8px; background: #202225; }
.p-dot { width: 15px; height: 15px; margin-right: 16px; border-radius: 50%; background: #38bdf8; }
.p-name { display: flex; align-items: center; gap: 14px; padding-top: 3px; font-size: 22.8px; font-weight: 600; line-height: 36px; letter-spacing: -0.3px; }
.p-name svg { color: #60a5fa; margin-bottom: 4px; }
.p-role { font-size: 19.6px; line-height: 32px; color: #8e9297; letter-spacing: -0.3px; }
.p-folder { display: flex; align-items: center; gap: 7px; font-size: 18px; line-height: 25px; color: #686c73; letter-spacing: -0.3px; }
.p-idle { font-size: 18px; line-height: 26px; color: #565a61; letter-spacing: -0.3px; }

/* ── status bar, desktop strip below ── */
.desk { height: 50px; flex-shrink: 0; background: linear-gradient(90deg, #d8b093 0, #a5683f 6%, #5a2c1a 16%, #b0714a 24%, #7c4228 36%, #a86440 48%, #3a1b16 56%, #9c5c3c 66%, #c08a66 74%, #6a3826 88%, #a5683f 100%); }
.statusbar { height: 46px; background: #007acc; border-radius: 0 0 0 10px; display: flex; align-items: center; padding-left: 19px; color: #fff; font-size: 23.6px; letter-spacing: -0.1px; }
.statusbar svg + svg { margin-left: 34px; }
.statusbar span { margin-left: 12px; padding-top: 2px; }
</style>
